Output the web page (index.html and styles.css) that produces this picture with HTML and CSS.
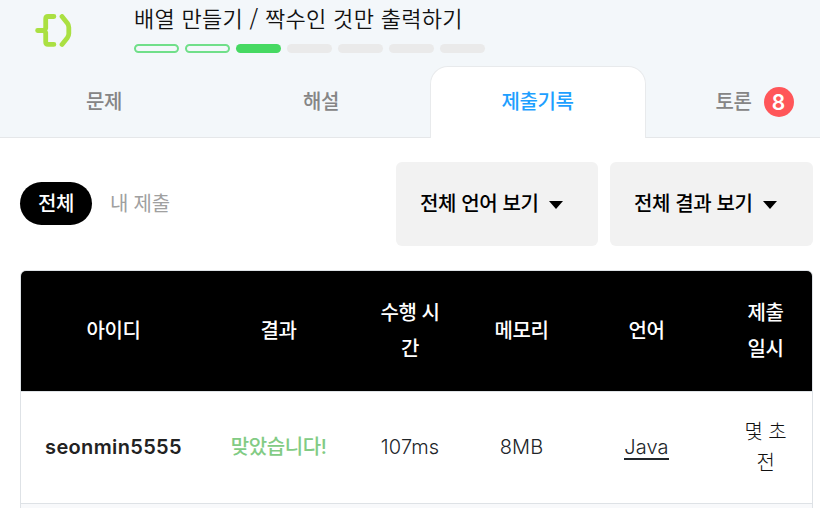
FILE: index.html
```
<!DOCTYPE html>
<html lang="ko">
<head>
<meta charset="utf-8">
<title>배열 만들기 / 짝수인 것만 출력하기</title>
<link rel="stylesheet" href="styles.css">
</head>
<body>
<header class="top">
  <div class="lesson">
    <svg class="logo" width="37" height="34" viewBox="0 0 37 34" fill="none" stroke="#aae042" stroke-width="4.8" stroke-linecap="round" stroke-linejoin="round">
      <path d="M18.9 2.5H13Q10.7 2.5 10.7 5.1V14.2L9.4 16.5L10.7 18.8V28Q10.7 30.4 13 30.4H18.9M2.6 16.5H9.1"/>
      <path d="M27 2.5L32.4 9.2Q33.8 11.2 33.8 13.5V19.5Q33.8 21.6 32.4 23.7L27 30.4"/>
    </svg>
    <div class="heading">
      <h1>배열 만들기 / 짝수인 것만 출력하기</h1>
      <div class="steps"><i class="done"></i><i class="done"></i><i class="current"></i><i></i><i></i><i></i><i></i></div>
    </div>
  </div>
  <nav class="tabs">
    <a class="tab"><span>문제</span></a>
    <a class="tab"><span>해설</span></a>
    <a class="tab active"><span>제출기록</span></a>
    <a class="tab"><span>토론</span><b class="badge">8</b></a>
  </nav>
</header>
<main>
  <div class="filters">
    <span class="pill">전체</span>
    <span class="mine">내 제출</span>
    <button class="select first"><span>전체 언어 보기</span><i class="caret"></i></button>
    <button class="select"><span>전체 결과 보기</span><i class="caret"></i></button>
  </div>
  <div class="table">
    <div class="row head">
      <div>아이디</div><div>결과</div><div>수행 시<br>간</div><div>메모리</div><div>언어</div><div>제출<br>일시</div>
    </div>
    <div class="row">
      <div class="user">seonmin5555</div><div class="ok">맞았습니다!</div><div class="num">107ms</div><div class="num">8MB</div><div class="num"><a class="lang">Java</a></div><div class="when">몇 초<br>전</div>
    </div>
    <div class="row next"></div>
  </div>
</main>
</body>
</html>
```
FILE: styles.css
```
* { box-sizing: border-box; }
body {
  margin: 0;
  height: 508px;
  overflow: hidden;
  background: #fff;
  color: #212529;
  font-family: Inter, "Noto Sans CJK KR", sans-serif;
  font-size: 20px;
  letter-spacing: -0.4px;
}
.top { height: 138px; background: #f3f7fa; overflow: hidden; }
.lesson { display: flex; height: 66px; padding-left: 35px; }
.logo { margin-top: 14px; flex: none; }
.heading { margin-left: 62px; }
h1 {
  margin: 1px 0 0;
  height: 32px;
  line-height: 33px;
  font-family: "Noto Sans CJK KR", sans-serif;
  font-size: 22px;
  font-weight: 350;
  letter-spacing: 0.3px;
  color: #111;
  white-space: nowrap;
}
.steps { display: flex; gap: 6px; margin-top: 11px; }
.steps i { width: 45px; height: 9px; border-radius: 5px; background: #eaeaea; }
.steps .done { background: transparent; border: 2px solid #70df89; }
.steps .current { background: #46d962; }
.tabs {
  display: grid;
  grid-template-columns: repeat(4, 216px);
  column-gap: 1px;
  margin-left: -4px;
  height: 72px;
  width: 867px;
  box-shadow: inset 0 -1px #e5e7e9;
}
.tab {
  display: flex;
  align-items: center;
  justify-content: center;
  font-weight: 500;
  color: #858585;
}
.tab span { padding-bottom: 3px; }
.tab:last-child { padding-right: 1px; }
.active {
  background: #fff;
  color: #1e9fff;
  border: 1px solid #e8eaec;
  border-bottom: 0;
  border-radius: 18px 18px 0 0;
}
.active span { padding-bottom: 4px; padding-right: 1px; }
.badge {
  display: grid;
  place-items: center;
  width: 30px;
  height: 30px;
  margin-left: 12px;
  border-radius: 50%;
  background: #ff5659;
  color: #fff;
  font-size: 21px;
  font-weight: 600;
  letter-spacing: 0;
}
main { padding: 24px 7px 0 20px; }
.filters { display: flex; align-items: center; height: 84px; }
.pill {
  width: 72px;
  height: 43px;
  margin-bottom: 1px;
  border-radius: 22px;
  background: #000;
  color: #fff;
  font-weight: 500;
  line-height: 44px;
  text-align: center;
}
.mine { margin-left: 18px; padding-bottom: 3px; color: #a0a0a0; letter-spacing: -0.2px; }
.select {
  display: flex;
  align-items: center;
  width: 203px;
  height: 84px;
  margin-left: 12px;
  padding: 0 0 0 24px;
  border: 0;
  border-radius: 6px;
  background: #f2f2f2;
  color: #000;
  font: inherit;
  font-weight: 500;
  letter-spacing: -0.3px;
  white-space: nowrap;
}
.select span { padding-bottom: 3px; }
.first { width: 202px; margin-left: auto; }
.caret {
  margin-left: 10px;
  margin-top: 1px;
  border: 7.5px solid transparent;
  border-top: 8px solid #000;
  border-bottom: 0;
}
.table {
  margin-top: 24px;
  height: 260px;
  border: 1px solid #dee2e6;
  border-radius: 6px 6px 0 0;
  overflow: hidden;
}
.row {
  display: grid;
  grid-template-columns: 185px 145px 118px 105px 145px 93px;
  align-items: center;
  height: 112px;
  text-align: center;
  border-bottom: 1px solid #dee2e6;
}
.head {
  height: 121px;
  background: #000;
  color: #fff;
  font-weight: 500;
  line-height: 36px;
}
.next { background: #f8f9fb; }
.user { padding-bottom: 2px; font-weight: 600; letter-spacing: 0.35px; color: #222; }
.ok { padding-bottom: 4px; color: #82cb84; font-weight: 500; }
.num { padding-bottom: 2px; font-weight: 350; letter-spacing: 0.1px; }
.lang {
  border-bottom: 2px solid #212529;
  display: inline-block;
  line-height: 21px;
  position: relative;
  top: 1px;
}
.when { line-height: 31px; font-weight: 300; color: #111; letter-spacing: -0.2px; }
```
